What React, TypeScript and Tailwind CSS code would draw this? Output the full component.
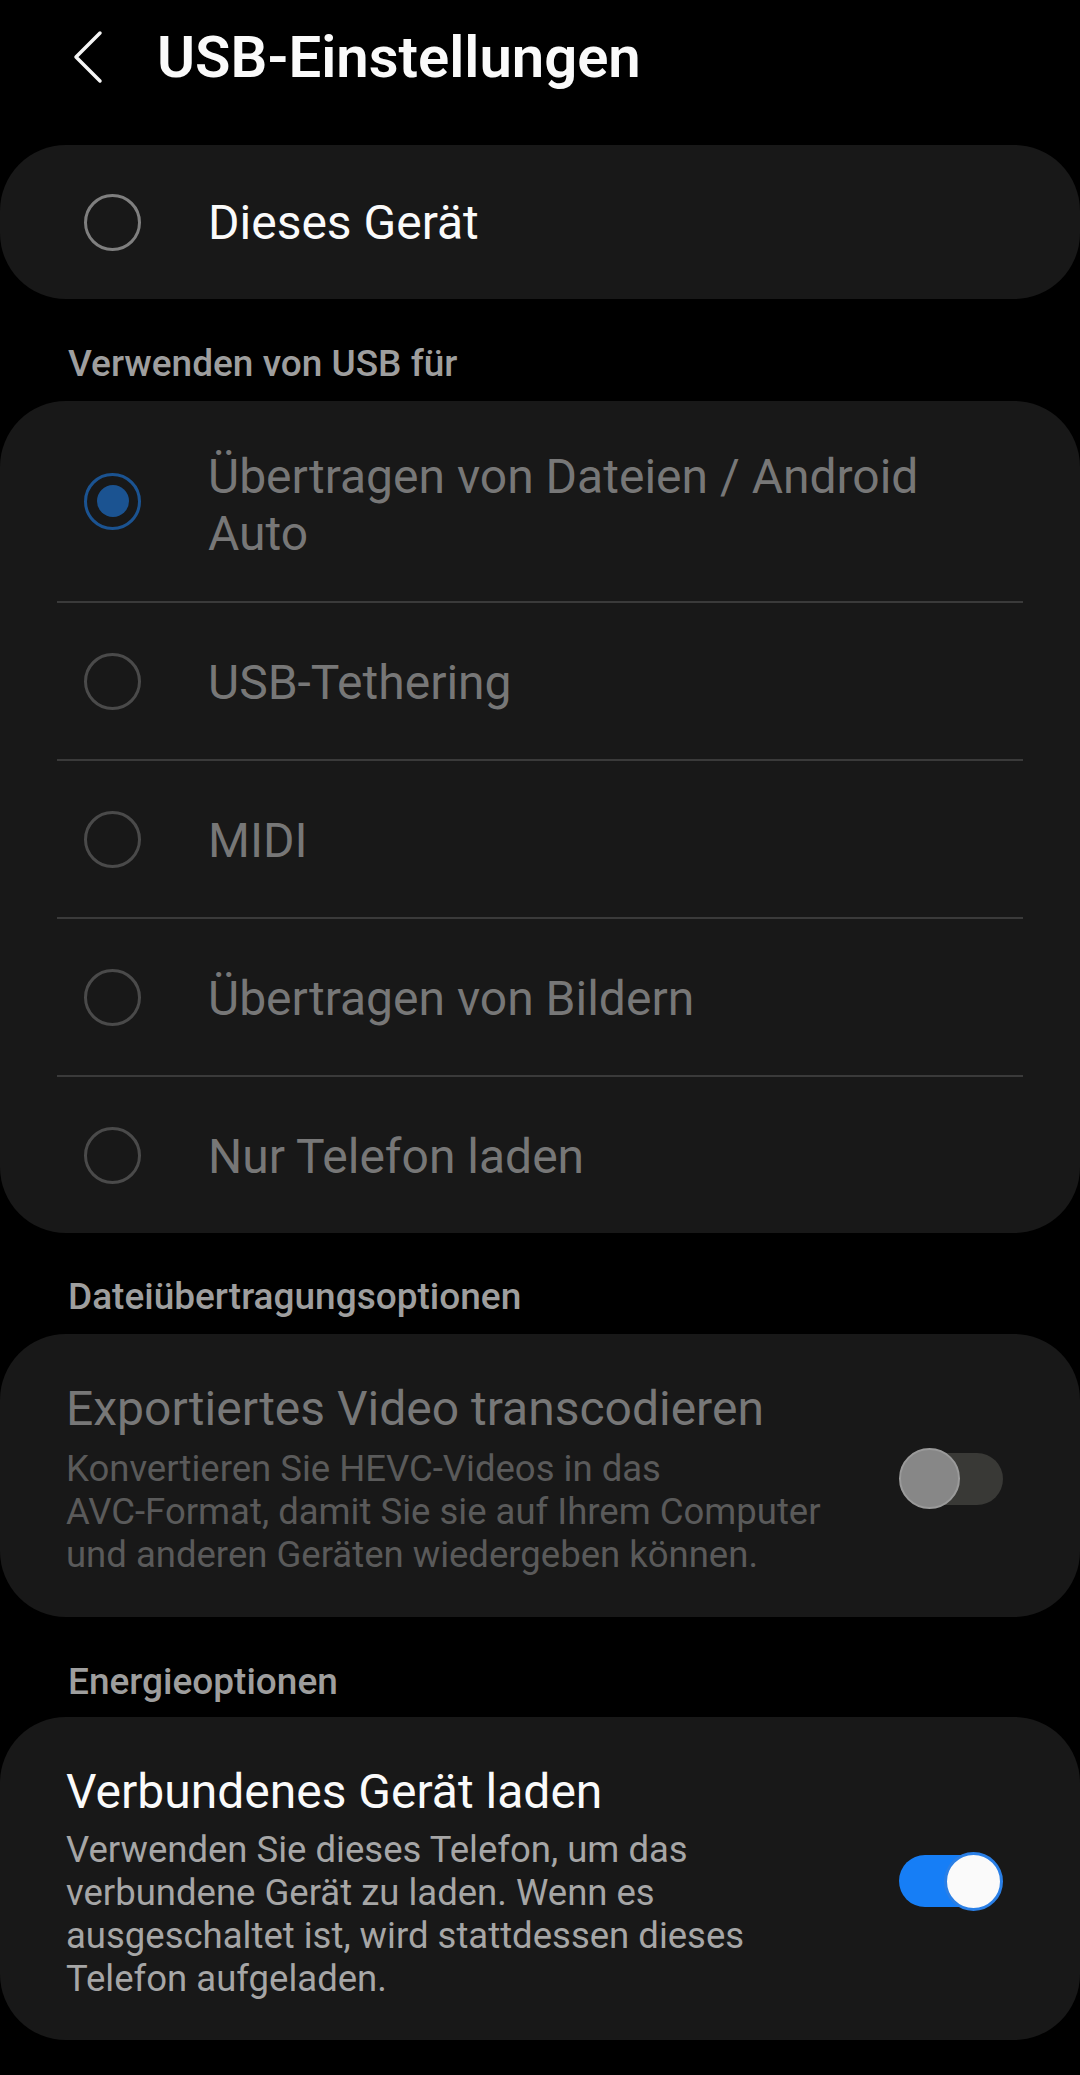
const font = { fontFamily: "Roboto, 'Noto Sans', 'Liberation Sans', sans-serif" };

function Radio({ checked = false, dim = false }: { checked?: boolean; dim?: boolean }) {
  if (checked) {
    return (
      <div className="flex h-[57px] w-[57px] shrink-0 items-center justify-center rounded-full border-[3px] border-[#1b5391]">
        <div className="h-[32px] w-[32px] rounded-full bg-[#1b5391]" />
      </div>
    );
  }
  return (
    <div
      className={
        "h-[57px] w-[57px] shrink-0 rounded-full border-[3px] " +
        (dim ? "border-[#4a4a4a]" : "border-[#7f7f7f]")
      }
    />
  );
}

function Toggle({ on }: { on: boolean }) {
  if (on) {
    return (
      <div className="relative h-[61px] w-[104px] shrink-0">
        <div className="absolute left-0 top-[4px] h-[52px] w-[96px] rounded-full bg-[#167ef6]" />
        <div className="absolute right-0 top-[1px] h-[59px] w-[59px] rounded-full border-[3px] border-[#2a7fe6] bg-[#fafafa]" />
      </div>
    );
  }
  return (
    <div className="relative h-[61px] w-[104px] shrink-0">
      <div className="absolute right-0 top-[5px] h-[52px] w-[96px] rounded-full bg-[#393936]" />
      <div className="absolute left-0 top-0 h-[61px] w-[61px] rounded-full border-2 border-[#9a9a9a] bg-[#878787]" />
    </div>
  );
}

function SectionHeader({ children, className }: { children: string; className: string }) {
  return (
    <div className={"pl-[68px] text-[37px] font-medium leading-[44px] text-[#9e9e9e] " + className}>
      {children}
    </div>
  );
}

const options = [
  { label: "USB-Tethering" },
  { label: "MIDI" },
  { label: "Übertragen von Bildern" },
  { label: "Nur Telefon laden" },
];

export default function App() {
  return (
    <div className="min-h-[2075px] w-[1080px] bg-black text-white" style={font}>
      {/* Header */}
      <div className="flex h-[114px] items-center pl-[72px]">
        <svg width="32" height="54" viewBox="0 0 32 54" className="shrink-0">
          <polyline
            points="28,3 4,27 28,51"
            fill="none"
            stroke="#f5f5f5"
            strokeWidth="3.5"
            strokeLinecap="round"
            strokeLinejoin="round"
          />
        </svg>
        <h1 className="ml-[53px] text-[58px] font-semibold leading-[72px] text-[#fafafa]">USB-Einstellungen</h1>
      </div>

      {/* Dieses Gerät */}
      <div className="mt-[31px] flex h-[154px] items-center gap-[67px] rounded-[66px] bg-[#181818] pl-[84px]">
        <Radio />
        <span className="text-[48px] leading-[57px] text-[#fafafa]">Dieses Gerät</span>
      </div>

      <SectionHeader className="mb-[15px] mt-[43px]">Verwenden von USB für</SectionHeader>

      <div className="rounded-[66px] bg-[#181818]">
        <div className="flex h-[200px] items-center gap-[67px] pl-[84px] pr-[102px]">
          <Radio checked />
          <span className="pt-[8px] text-[48px] leading-[57px] text-[#777777]">Übertragen von Dateien / Android Auto</span>
        </div>
        {options.map((o) => (
          <div key={o.label}>
            <div className="mx-[57px] h-[2px] bg-[#3a3a3a]" />
            <div className="flex h-[156px] items-center gap-[67px] pl-[84px] pr-[102px]">
              <Radio dim />
              <span className="pt-[2px] text-[48px] leading-[57px] text-[#777777]">{o.label}</span>
            </div>
          </div>
        ))}
      </div>

      <SectionHeader className="mb-[15px] mt-[42px]">Dateiübertragungsoptionen</SectionHeader>

      <div className="flex items-center gap-[40px] rounded-[66px] bg-[#181818] pb-[41px] pl-[66px] pr-[77px] pt-[46px]">
        <div className="flex-1">
          <div className="text-[48px] leading-[57px] text-[#777777]">Exportiertes Video transcodieren</div>
          <p className="mt-[10px] text-[36.5px] leading-[43px] text-[#5a5a5a]">
            Konvertieren Sie HEVC-Videos in das
            <br />
            AVC-Format, damit Sie sie auf Ihrem Computer
            <br />
            und anderen Geräten wiedergeben können.
          </p>
        </div>
        <Toggle on={false} />
      </div>

      <SectionHeader className="mb-[13px] mt-[43px]">Energieoptionen</SectionHeader>

      <div className="flex items-center gap-[40px] rounded-[66px] bg-[#181818] pb-[40px] pl-[66px] pr-[77px] pt-[46px]">
        <div className="flex-1">
          <div className="text-[48px] leading-[57px] text-[#fafafa]">Verbundenes Gerät laden</div>
          <p className="mt-[8px] text-[36.5px] leading-[43px] text-[#a6a6a6]">
            Verwenden Sie dieses Telefon, um das verbundene Gerät zu laden. Wenn es ausgeschaltet ist, wird stattdessen
            dieses Telefon aufgeladen.
          </p>
        </div>
        <Toggle on />
      </div>
    </div>
  );
}
